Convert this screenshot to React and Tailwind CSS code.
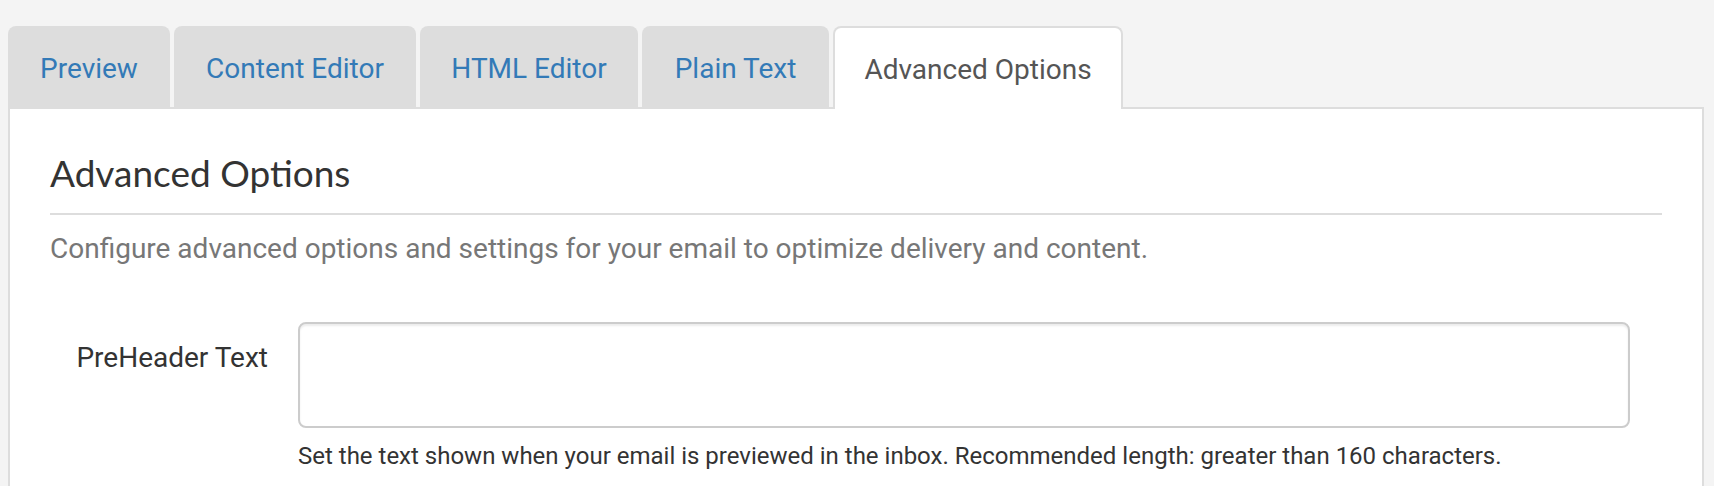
import React, { useState } from 'react';

const tabs = [
  { label: 'Preview', width: 'w-[162px]' },
  { label: 'Content Editor', width: 'w-[242px]' },
  { label: 'HTML Editor', width: 'w-[218px]' },
  { label: 'Plain Text', width: 'w-[187px]' },
  { label: 'Advanced Options', width: 'w-[290px]' },
];

const App = () => {
  const [active, setActive] = useState('Advanced Options');
  const [preheader, setPreheader] = useState('');

  return (
    <div className="min-h-screen bg-[#f4f4f4] pt-[26px] pl-[8px] pr-[10px] font-['Roboto',sans-serif]">
      {/* Tabs */}
      <div className="flex gap-[4px]">
        {tabs.map((tab) => {
          const isActive = tab.label === active;
          return (
            <button
              key={tab.label}
              onClick={() => setActive(tab.label)}
              className={
                isActive
                  ? `relative z-10 h-[83px] ${tab.width} pt-[2px] rounded-t-[8px] border-2 border-b-0 border-[#ddd] bg-white text-[28px] leading-[40px] text-[#555]`
                  : `relative z-10 h-[83px] ${tab.width} pt-[2px] rounded-t-[8px] bg-[#ddd] text-[28px] leading-[40px] text-[#337ab7]`
              }
            >
              {tab.label}
            </button>
          );
        })}
      </div>

      {/* Panel */}
      <div className="-mt-[2px] border-2 border-[#ddd] bg-white px-[40px] pt-[44px] pb-[40px]">
        <div className="border-b-2 border-[#ddd] pb-[20px]">
          <h2 className="font-['Lato',sans-serif] text-[37px] leading-[40px] text-[#333]">Advanced Options</h2>
        </div>
        <p className="mt-[16px] text-[28px] leading-[36px] text-[#777]">
          Configure advanced options and settings for your email to optimize delivery and content.
        </p>

        <div className="mt-[55px] flex">
          <label className="w-[248px] shrink-0 pr-[30px] pt-[16px] text-right text-[28px] leading-[40px] text-[#333]">
            PreHeader Text
          </label>
          <div className="flex-1 pr-[32px]">
            <textarea
              value={preheader}
              onChange={(e) => setPreheader(e.target.value)}
              className="block h-[106px] w-full resize-none rounded-[8px] border-2 border-[#ccc] shadow-[inset_0_2px_2px_rgba(0,0,0,0.075)] outline-none"
            />
            <p className="mt-[11px] text-[24px] leading-[34px] text-[#333]">
              Set the text shown when your email is previewed in the inbox. Recommended length: greater than 160 characters.
            </p>
          </div>
        </div>
      </div>
    </div>
  );
};

export default App;
